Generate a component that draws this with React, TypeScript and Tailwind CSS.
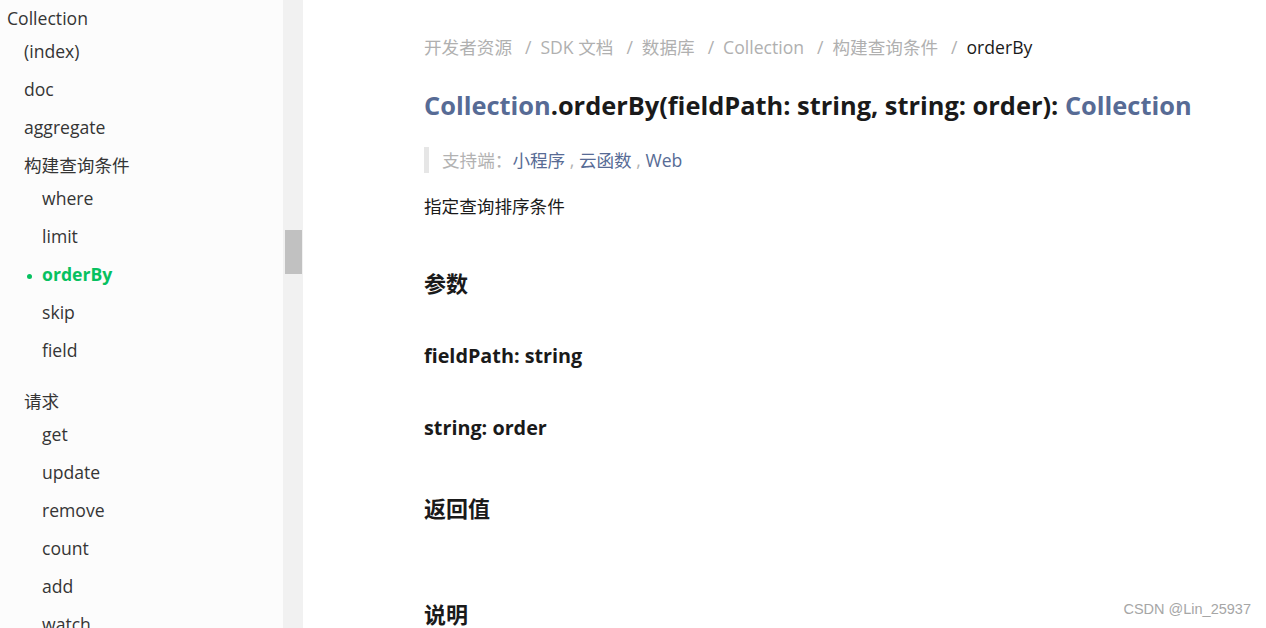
import React from 'react';

const font = "font-['Open_Sans','Noto_Sans_CJK_SC',sans-serif]";

const basics = ['(index)', 'doc', 'aggregate'];
const queryItems = ['where', 'limit', 'orderBy', 'skip', 'field'];
const requestItems = ['get', 'update', 'remove', 'count', 'add', 'watch'];

const NavItem = ({ label, active }: { label: string; active?: boolean }) => (
  <li className="py-[5px] pl-[42px] leading-[28px]">
    {active ? (
      <span className="relative font-bold text-[#07c160]">
        <span className="absolute left-[-15px] top-[12px] h-[5px] w-[5px] rounded-full bg-[#07c160]" />
        {label}
      </span>
    ) : (
      <span>{label}</span>
    )}
  </li>
);

const Sidebar = () => (
  <div className="flex h-full shrink-0">
    <aside className="w-[283px] overflow-hidden bg-[#fcfcfc] text-[17.6px] text-[#353535]">
      <div className="pl-[7px] pt-[4px] leading-[28px]">Collection</div>
      <ul>
        {basics.map((b) => (
          <li key={b} className="py-[5px] pl-[24px] leading-[28px]">
            {b}
          </li>
        ))}
        <li>
          <div className="pl-[24px] pt-[5px] leading-[28px]">构建查询条件</div>
          <ul>
            {queryItems.map((q) => (
              <NavItem key={q} label={q} active={q === 'orderBy'} />
            ))}
          </ul>
        </li>
        <li className="mt-[13px]">
          <div className="pl-[24px] pt-[5px] leading-[28px]">请求</div>
          <ul>
            {requestItems.map((r) => (
              <NavItem key={r} label={r} />
            ))}
          </ul>
        </li>
      </ul>
    </aside>
    <div className="w-[20px] bg-[#f1f1f1] pl-[2px] pt-[230px]">
      <div className="h-[44px] w-[17px] bg-[#c1c1c1]" />
    </div>
  </div>
);

const crumbs = ['开发者资源', 'SDK 文档', '数据库', 'Collection', '构建查询条件'];

const Main = () => (
  <main className="flex-1 bg-white pl-[121px] pt-[33px] text-[#1a1a1a]">
    <nav className="flex text-[17.6px] leading-[28px] text-[#b0b0b0]">
      {crumbs.map((c) => (
        <span key={c} className="flex">
          <span>{c}</span>
          <span className="ml-[13px] mr-[9px]">/</span>
        </span>
      ))}
      <span className="text-[#1a1a1a]">orderBy</span>
    </nav>
    <h1 className="mt-[24px] text-[25.4px] font-bold leading-[40px]">
      <span className="text-[#576b95]">Collection</span>.orderBy(fieldPath: string, string: order):{' '}
      <span className="text-[#576b95]">Collection</span>
    </h1>
    <blockquote className="mt-[22px] border-l-[5px] border-[#e6e6e6] pl-[13px] text-[17.6px] leading-[26px] text-[#b2b2b2]">
      支持端：<span className="text-[#576b95]">小程序</span> , <span className="text-[#576b95]">云函数</span> ,{' '}
      <span className="text-[#576b95]">Web</span>
    </blockquote>
    <p className="mt-[19px] text-[17.6px] leading-[28px]">指定查询排序条件</p>
    <h2 className="mt-[47px] text-[22px] font-bold leading-[32px]">参数</h2>
    <h3 className="mt-[42px] text-[19.8px] font-bold leading-[30px]">fieldPath: string</h3>
    <h3 className="mt-[42px] text-[19.8px] font-bold leading-[30px]">string: order</h3>
    <h2 className="mt-[49px] text-[22px] font-bold leading-[32px]">返回值</h2>
    <h2 className="mt-[74px] text-[22px] font-bold leading-[32px]">说明</h2>
  </main>
);

export default function App() {
  return (
    <div className={`relative flex h-[628px] w-[1266px] overflow-hidden ${font}`}>
      <Sidebar />
      <Main />
      <div className="absolute bottom-[7px] right-[15px] font-['Liberation_Sans',sans-serif] text-[14.5px] text-[#a6a6a6]">
        CSDN @Lin_25937
      </div>
    </div>
  );
}
